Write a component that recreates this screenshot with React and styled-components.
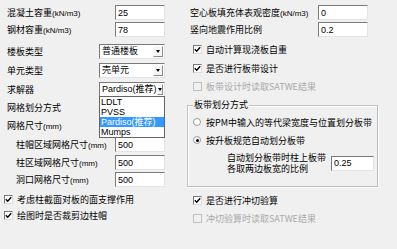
import React from 'react';
import styled, { createGlobalStyle } from 'styled-components';

const GlobalStyle = createGlobalStyle`
  html, body {
    margin: 0;
    padding: 0;
    background: #f0f0f0;
  }
  body {
    font-family: "Noto Sans CJK SC", "Liberation Sans", sans-serif;
    font-size: 9px;
    color: #000;
  }
`;

const Page = styled.div`
  display: flex;
  width: 397px;
  height: 249px;
  background: #f0f0f0;
  overflow: hidden;
`;

const Column = styled.div`
  display: flex;
  flex-direction: column;
  width: ${p => p.$w}px;
  padding-top: 5px;
  flex-shrink: 0;
`;

const Row = styled.div`
  display: flex;
  align-items: center;
  height: ${p => p.$h || 15}px;
  margin-top: ${p => p.$mt || 0}px;
  padding-left: ${p => p.$indent ?? 7}px;
  white-space: nowrap;
  color: ${p => (p.$disabled ? '#a9a9a9' : '#000')};
`;

const Label = styled.span`
  width: ${p => p.$w}px;
  flex-shrink: 0;
  line-height: 1;
`;

const Unit = styled.span`
  font-family: "Liberation Sans", sans-serif;
  font-size: 8px;
`;

const TextBox = styled.div`
  box-sizing: border-box;
  width: ${p => p.$w || 50}px;
  height: 15px;
  flex-shrink: 0;
  background: #fff;
  border: 1px solid;
  border-color: #7a7a7a #e3e3e3 #e3e3e3 #7a7a7a;
  padding-left: 2px;
  display: flex;
  align-items: center;
  font-family: "Liberation Sans", sans-serif;
  font-size: 9px;
`;

const Select = styled.div`
  position: relative;
  box-sizing: border-box;
  width: 66px;
  height: 15px;
  background: #fff;
  border: 1px solid;
  border-color: #7a7a7a #e3e3e3 #e3e3e3 #7a7a7a;
  display: flex;
  align-items: center;
  justify-content: space-between;
  padding-left: 2px;
  font-size: 9px;
`;

const SelectText = styled.span`
  line-height: 1;
  font-family: "Liberation Sans", "Noto Sans CJK SC", sans-serif;
`;

const ArrowBtn = styled.span`
  box-sizing: border-box;
  width: 10px;
  height: 11px;
  margin-right: 1px;
  background: #f4f4f4;
  border: 1px solid;
  border-color: #fff #8a8a8a #8a8a8a #fff;
  display: flex;
  align-items: center;
  justify-content: center;
  &::after {
    content: '';
    border-left: 2.5px solid transparent;
    border-right: 2.5px solid transparent;
    border-top: 3px solid #000;
  }
`;

const DropList = styled.ul`
  position: absolute;
  top: 13px;
  left: -1px;
  z-index: 5;
  box-sizing: border-box;
  width: 66px;
  margin: 0;
  padding: 0;
  list-style: none;
  background: #fff;
  border: 1px solid #646464;
`;

const Option = styled.li`
  height: 10px;
  line-height: 10px;
  padding-left: 1px;
  font-family: "Liberation Sans", "Noto Sans CJK SC", sans-serif;
  font-size: 9px;
  background: ${p => (p.$active ? '#3399ff' : 'transparent')};
  color: ${p => (p.$active ? '#fff' : '#000')};
`;

const Box = styled.span`
  box-sizing: border-box;
  width: 9px;
  height: 9px;
  flex-shrink: 0;
  margin-right: 4px;
  background: ${p => (p.$disabled ? '#f0f0f0' : '#fff')};
  border: 1px solid;
  border-color: ${p => (p.$disabled ? '#c0c0c0' : '#7a7a7a #dcdcdc #dcdcdc #7a7a7a')};
  display: flex;
  align-items: center;
  justify-content: center;
`;

const Radio = styled.span`
  box-sizing: border-box;
  width: 8px;
  height: 8px;
  flex-shrink: 0;
  margin-right: 5px;
  border-radius: 50%;
  background: #fff;
  border: 1px solid #9a9a9a;
  display: flex;
  align-items: center;
  justify-content: center;
  &::after {
    content: '';
    display: ${p => (p.$on ? 'block' : 'none')};
    width: 3px;
    height: 3px;
    border-radius: 50%;
    background: #000;
  }
`;

const Group = styled.div`
  box-sizing: border-box;
  width: 191px;
  height: 82px;
  margin-top: ${p => p.$mt || 0}px;
  padding-left: 5px;
  border: 1px solid;
  border-color: #c4c4c4 #bcbcbc #bcbcbc #c4c4c4;
  box-shadow: inset 1px 1px 0 #fff, 1px 1px 0 #fff;
  display: flex;
  flex-direction: column;
`;

const GroupTitle = styled.span`
  align-self: flex-start;
  margin: -6px 0 0 0;
  padding: 0 1px;
  height: 10px;
  line-height: 10px;
  background: #f0f0f0;
`;

const Note = styled.div`
  display: flex;
  flex-direction: column;
  width: 104px;
  margin-left: 34px;
  flex-shrink: 0;
`;

const NoteLine = styled.span`
  height: 11px;
  line-height: 11px;
`;

const Tick = () => (
  <svg width="7" height="7" viewBox="0 0 7 7">
    <path d="M0.8 3.3 L2.7 5.2 L6.2 1.2" fill="none" stroke="#000" strokeWidth="1.4" />
  </svg>
);

const CheckItem = ({ checked, disabled, children, ...rest }) => (
  <Row $h={14} $disabled={disabled} {...rest}>
    <Box $disabled={disabled}>{checked && <Tick />}</Box>
    {children}
  </Row>
);

const App = () => (
  <>
    <GlobalStyle />
    <Page>
      <Column $w={187}>
        <Row>
          <Label $w={108}>混凝土容重<Unit>(kN/m3)</Unit></Label>
          <TextBox>25</TextBox>
        </Row>
        <Row $mt={2}>
          <Label $w={108}>钢材容重<Unit>(kN/m3)</Unit></Label>
          <TextBox>78</TextBox>
        </Row>
        <Row $mt={7}>
          <Label $w={92}>楼板类型</Label>
          <Select><SelectText>普通楼板</SelectText><ArrowBtn /></Select>
        </Row>
        <Row $mt={4}>
          <Label $w={92}>单元类型</Label>
          <Select><SelectText>壳单元</SelectText><ArrowBtn /></Select>
        </Row>
        <Row $mt={4}>
          <Label $w={92}>求解器</Label>
          <Select>
            <SelectText>Pardiso(推荐)</SelectText>
            <ArrowBtn />
            <DropList>
              <Option>LDLT</Option>
              <Option>PVSS</Option>
              <Option $active>Pardiso(推荐)</Option>
              <Option>Mumps</Option>
            </DropList>
          </Select>
        </Row>
        <Row $mt={3}>
          <Label $w={120}>网格划分方式</Label>
        </Row>
        <Row $mt={3}>
          <Label $w={120}>网格尺寸<Unit>(mm)</Unit></Label>
        </Row>
        <Row $mt={4} $indent={16}>
          <Label $w={99}>柱帽区域网格尺寸<Unit>(mm)</Unit></Label>
          <TextBox>500</TextBox>
        </Row>
        <Row $mt={3} $indent={16}>
          <Label $w={99}>柱区域网格尺寸<Unit>(mm)</Unit></Label>
          <TextBox>500</TextBox>
        </Row>
        <Row $mt={2} $indent={16}>
          <Label $w={99}>洞口网格尺寸<Unit>(mm)</Unit></Label>
          <TextBox>500</TextBox>
        </Row>
        <CheckItem checked $mt={5} $indent={4}>考虑柱截面对板的面支撑作用</CheckItem>
        <CheckItem checked $mt={2} $indent={4}>绘图时是否裁剪边柱帽</CheckItem>
      </Column>

      <Column $w={195}>
        <Row $indent={3}>
          <Label $w={128}>空心板填充体表观密度<Unit>(kN/m3)</Unit></Label>
          <TextBox>0</TextBox>
        </Row>
        <Row $mt={2} $indent={3}>
          <Label $w={128}>竖向地震作用比例</Label>
          <TextBox>0.2</TextBox>
        </Row>
        <CheckItem checked $mt={5} $indent={6}>自动计算现浇板自重</CheckItem>
        <CheckItem checked $mt={5} $indent={6}>是否进行板带设计</CheckItem>
        <CheckItem disabled $mt={4} $indent={6}>板带设计时读取SATWE结果</CheckItem>
        <Group $mt={12}>
          <GroupTitle>板带划分方式</GroupTitle>
          <Row $h={14} $mt={5} $indent={0}>
            <Radio />
            按PM中输入的等代梁宽度与位置划分板带
          </Row>
          <Row $h={14} $mt={4} $indent={0}>
            <Radio $on />
            按升板规范自动划分板带
          </Row>
          <Row $h={22} $mt={5} $indent={0}>
            <Note>
              <NoteLine>自动划分板带时柱上板带</NoteLine>
              <NoteLine>各取两边板宽的比例</NoteLine>
            </Note>
            <TextBox $w={43}>0.25</TextBox>
          </Row>
        </Group>
        <CheckItem checked $mt={6} $indent={6}>是否进行冲切验算</CheckItem>
        <CheckItem disabled $mt={4} $indent={6}>冲切验算时读取SATWE结果</CheckItem>
      </Column>
    </Page>
  </>
);

export default App;
